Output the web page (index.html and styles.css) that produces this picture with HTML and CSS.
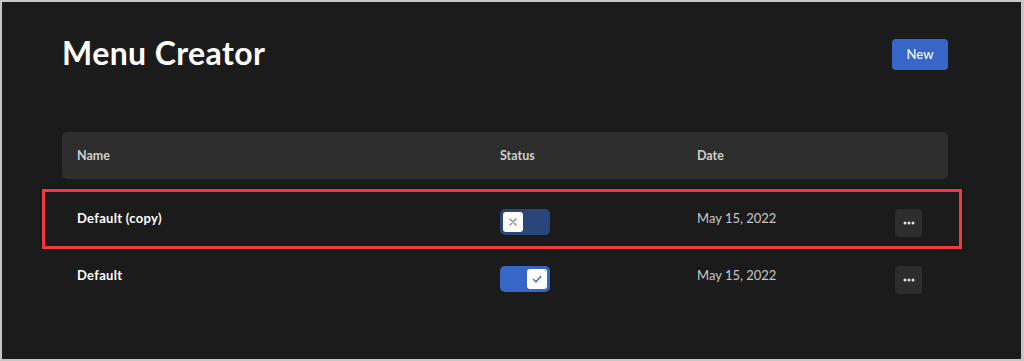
FILE: index.html
```html
<!DOCTYPE html>
<html lang="en">
<head>
    <meta charset="UTF-8">
    <meta name="viewport" content="width=device-width, initial-scale=1.0">
    <title>Menu Creator</title>
    <link rel="stylesheet" href="styles.css">
</head>
<body>
    <div class="frame">
        <div class="page">
            <div class="page-header">
                <h1>Menu Creator</h1>
                <button class="btn-new">New</button>
            </div>

            <div class="table">
                <div class="table-head">
                    <div>Name</div>
                    <div>Status</div>
                    <div>Date</div>
                    <div></div>
                </div>

                <div class="table-row highlighted">
                    <div class="cell-name">Default (copy)</div>
                    <div>
                        <span class="toggle off">
                            <span class="knob">
                                <svg width="10" height="10" viewBox="0 0 10 10"><path d="M2 2 L8 8 M8 2 L2 8" stroke="#8a8a8a" stroke-width="1.4" stroke-linecap="round"/></svg>
                            </span>
                        </span>
                    </div>
                    <div class="cell-date">May 15, 2022</div>
                    <div><button class="btn-more"><svg width="12" height="4" viewBox="0 0 12 4"><circle cx="2" cy="2" r="1.5" fill="#e4e4e4"/><circle cx="6" cy="2" r="1.5" fill="#e4e4e4"/><circle cx="10" cy="2" r="1.5" fill="#e4e4e4"/></svg></button></div>
                </div>

                <div class="table-row">
                    <div class="cell-name">Default</div>
                    <div>
                        <span class="toggle on">
                            <span class="knob">
                                <svg width="10" height="10" viewBox="0 0 10 10"><path d="M1.5 5.5 L4 7.8 L8.8 2.5" fill="none" stroke="#3566c8" stroke-width="1.3" stroke-linecap="round" stroke-linejoin="round"/></svg>
                            </span>
                        </span>
                    </div>
                    <div class="cell-date">May 15, 2022</div>
                    <div><button class="btn-more"><svg width="12" height="4" viewBox="0 0 12 4"><circle cx="2" cy="2" r="1.5" fill="#e4e4e4"/><circle cx="6" cy="2" r="1.5" fill="#e4e4e4"/><circle cx="10" cy="2" r="1.5" fill="#e4e4e4"/></svg></button></div>
                </div>
            </div>
        </div>
    </div>
</body>
</html>
```

FILE: styles.css
```css
body {
    margin: 0;
    font-family: Lato, "Noto Sans", sans-serif;
    background-color: #c6c6c6;
}
.frame {
    box-sizing: border-box;
    height: 361px;
    border: 2px solid #c6c6c6;
    border-right-width: 3px;
    background-color: #1b1b1b;
    overflow: hidden;
}
.page {
    padding: 31px 73px 0 60px;
}
.page-header {
    display: flex;
    justify-content: space-between;
    align-items: center;
}
.page-header h1 {
    margin: 0;
    font-size: 32px;
    line-height: 40px;
    font-weight: 700;
    letter-spacing: 0.4px;
    color: #ffffff;
}
.btn-new {
    width: 56px;
    height: 31px;
    margin-top: 2px;
    border: none;
    border-radius: 4px;
    background-color: #3566c8;
    color: #eef2fb;
    font-family: Lato, "Noto Sans", sans-serif;
    font-size: 13px;
    font-weight: 600;
    cursor: pointer;
}
.table {
    margin-top: 59px;
}
.table-head, .table-row {
    display: grid;
    grid-template-columns: 423px 197px 198px 1fr;
    padding-left: 15px;
}
.table-head {
    height: 47px;
    align-items: center;
    background-color: #2d2d2d;
    border-radius: 5px;
    color: #cfcfcf;
    font-size: 12.5px;
    font-weight: 700;
    margin-bottom: 11px;
}
.table-row {
    height: 57px;
    box-sizing: border-box;
    padding-top: 19px;
    align-items: start;
    color: #ffffff;
    font-size: 13px;
}
.table-row.highlighted {
    position: relative;
}
.table-row.highlighted::after {
    content: "";
    position: absolute;
    top: -1px;
    left: -20px;
    right: -14px;
    bottom: -2px;
    border: 3px solid #ef3a40;
    box-shadow: 0 0 3px rgba(0, 0, 0, 0.5);
    pointer-events: none;
}
.cell-name {
    font-weight: 700;
    letter-spacing: 0.3px;
    line-height: 16px;
    padding-top: 1px;
}
.cell-date {
    color: #c9c9c9;
    font-size: 13px;
    line-height: 16px;
    padding-top: 1px;
}
.toggle {
    display: flex;
    align-items: center;
    box-sizing: border-box;
    width: 50px;
    height: 26px;
    padding: 0 3px;
    border-radius: 5px;
}
.toggle.off {
    background-color: #2a4678;
    justify-content: flex-start;
}
.toggle.on {
    background-color: #3566c8;
    justify-content: flex-end;
}
.knob {
    display: flex;
    align-items: center;
    justify-content: center;
    width: 20px;
    height: 20px;
    border-radius: 3px;
    background-color: #ffffff;
}
.btn-more {
    display: flex;
    align-items: center;
    justify-content: center;
    width: 27px;
    height: 28px;
    padding: 0;
    border: none;
    border-radius: 4px;
    background-color: #2d2d2d;
    cursor: pointer;
}
```
